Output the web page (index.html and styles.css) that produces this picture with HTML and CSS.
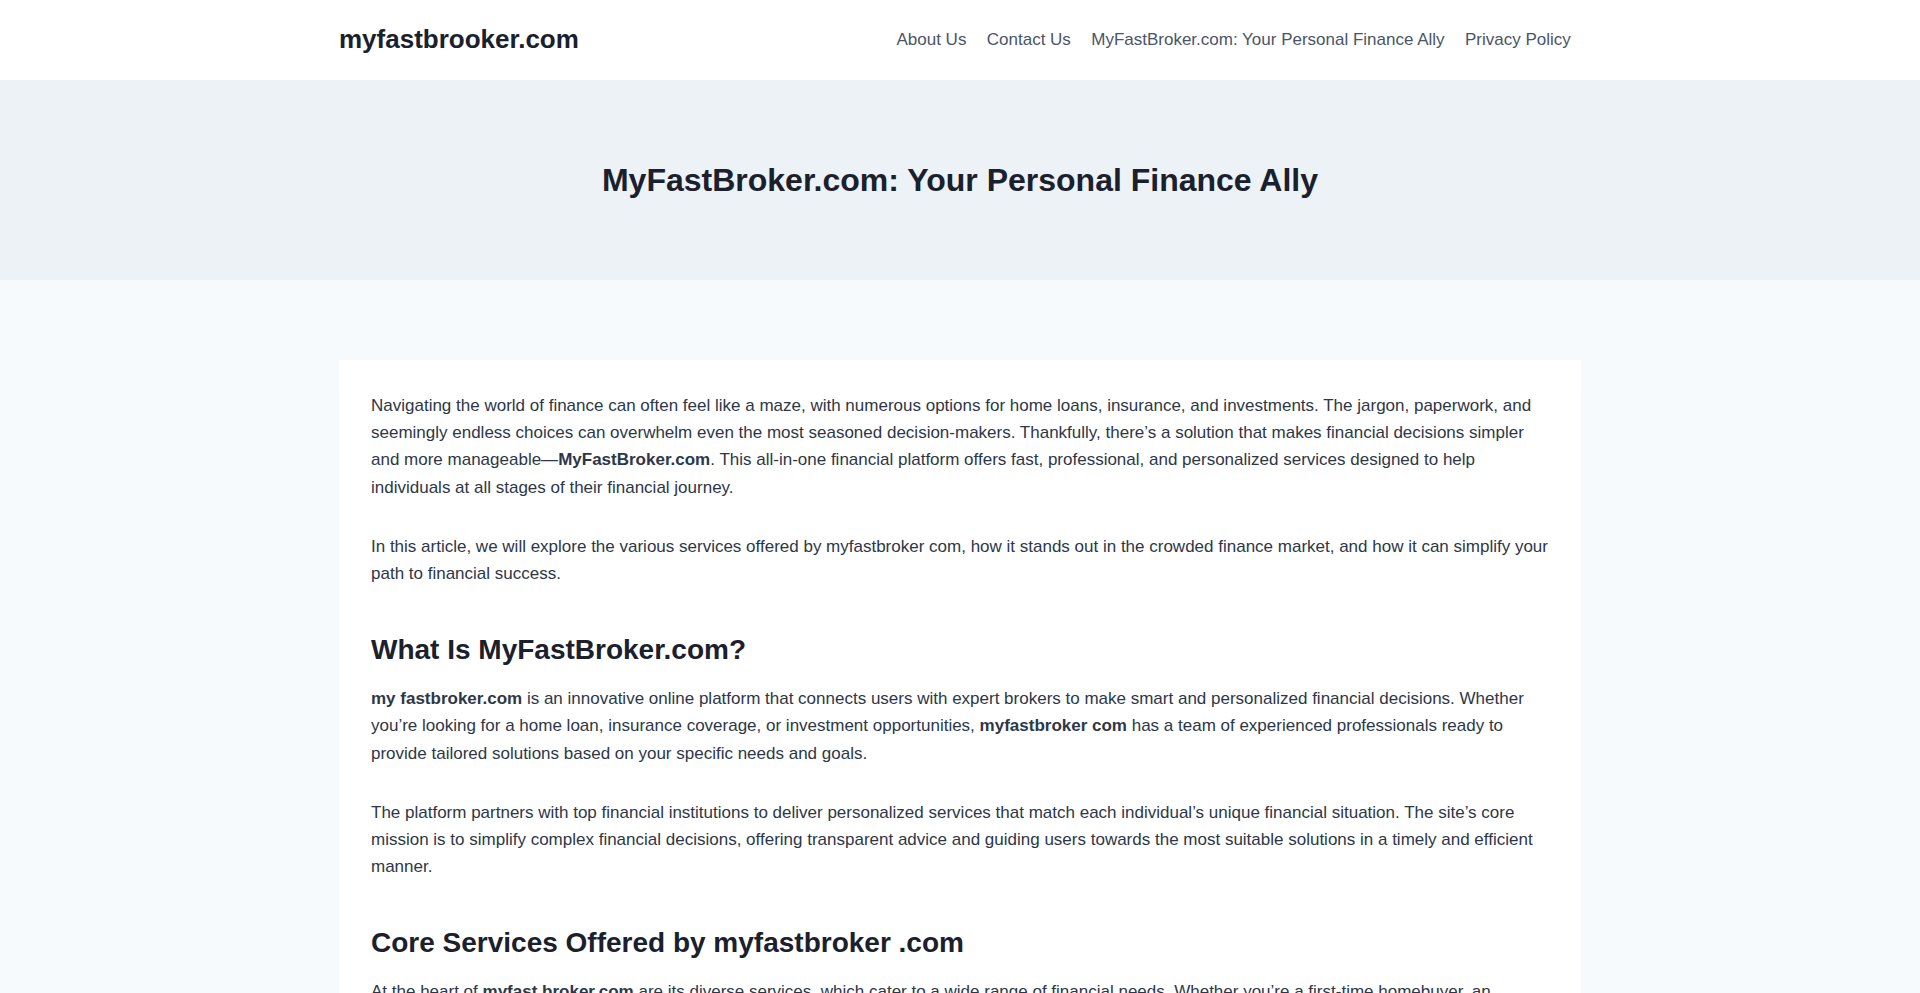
FILE: index.html
```html
<!DOCTYPE html>
<html lang="en">
<head>
<meta charset="utf-8">
<title>MyFastBroker.com: Your Personal Finance Ally</title>
<link rel="stylesheet" href="styles.css">
</head>
<body>
<header class="site-header">
  <div class="container header-inner">
    <a class="site-title" href="#">myfastbrooker.com</a>
    <nav class="main-nav">
      <ul class="menu">
        <li><a href="#">About Us</a></li>
        <li><a href="#">Contact Us</a></li>
        <li><a href="#">MyFastBroker.com: Your Personal Finance Ally</a></li>
        <li><a href="#">Privacy Policy</a></li>
      </ul>
    </nav>
  </div>
</header>

<section class="entry-hero">
  <div class="container hero-inner">
    <h1 class="entry-title">MyFastBroker.com: Your Personal Finance Ally</h1>
  </div>
</section>

<main class="content-area container">
  <article class="content-card">
    <div class="entry-content">
      <p>Navigating the world of finance can often feel like a maze, with numerous options for home loans, insurance, and investments. The jargon, paperwork, and seemingly endless choices can overwhelm even the most seasoned decision-makers. Thankfully, there’s a solution that makes financial decisions simpler and more manageable—<strong>MyFastBroker.com</strong>. This all-in-one financial platform offers fast, professional, and personalized services designed to help individuals at all stages of their financial journey.</p>
      <p>In this article, we will explore the various services offered by myfastbroker com, how it stands out in the crowded finance market, and how it can simplify your path to financial success.</p>
      <h2>What Is MyFastBroker.com?</h2>
      <p><strong>my fastbroker.com</strong> is an innovative online platform that connects users with expert brokers to make smart and personalized financial decisions. Whether you’re looking for a home loan, insurance coverage, or investment opportunities, <strong>myfastbroker com</strong> has a team of experienced professionals ready to provide tailored solutions based on your specific needs and goals.</p>
      <p>The platform partners with top financial institutions to deliver personalized services that match each individual’s unique financial situation. The site’s core mission is to simplify complex financial decisions, offering transparent advice and guiding users towards the most suitable solutions in a timely and efficient manner.</p>
      <h2>Core Services Offered by myfastbroker .com</h2>
      <p>At the heart of <strong>myfast broker.com</strong> are its diverse services, which cater to a wide range of financial needs. Whether you’re a first-time homebuyer, an experienced investor, or someone looking for the right insurance coverage, the platform offers expert guidance tailored to your situation.</p>
      <h3>1. Home Loans</h3>
      <p>Buying a home is one of the biggest financial decisions most people make. The platform connects you with mortgage brokers who compare rates from multiple lenders to find the best fit for your budget.</p>
    </div>
  </article>
</main>
</body>
</html>
```

FILE: styles.css
```css
* {
  box-sizing: border-box;
}

html, body {
  margin: 0;
  padding: 0;
}

body {
  background: #f7fafc;
  color: #2d3748;
  font-family: "Liberation Sans", Arial, sans-serif;
  font-size: 17px;
  line-height: 1.6;
}

a {
  text-decoration: none;
  color: inherit;
}

.container {
  max-width: 1290px;
  margin: 0 auto;
  padding: 0 24px;
}

/* Header */
.site-header {
  background: #ffffff;
}

.header-inner {
  height: 80px;
  display: flex;
  align-items: center;
  justify-content: space-between;
}

.site-title {
  font-size: 26px;
  font-weight: 700;
  line-height: 1.2;
  color: #1a202c;
}

.menu {
  list-style: none;
  margin: 0;
  padding: 0;
  display: flex;
  align-items: center;
}

.menu a {
  display: block;
  padding: 10px 10.2px;
  font-size: 17px;
  line-height: 1.6;
  color: #4a5568;
}

/* Hero */
.entry-hero {
  background: #edf2f7;
}

.hero-inner {
  min-height: 200px;
  display: flex;
  align-items: center;
  justify-content: center;
}

.entry-title {
  margin: 0;
  font-size: 32px;
  line-height: 1.5;
  font-weight: 700;
  color: #1a202c;
  text-align: center;
}

/* Content */
.content-area {
  margin-top: 80px;
  margin-bottom: 80px;
}

.content-card {
  background: #ffffff;
  padding: 32px;
  box-shadow: 0 15px 15px -10px rgba(0, 0, 0, 0.05);
  border-radius: 0;
}

.entry-content p {
  margin: 0 0 32px;
}

.entry-content strong {
  font-weight: 700;
}

.entry-content h2 {
  font-size: 28px;
  line-height: 1.5;
  font-weight: 700;
  color: #1a202c;
  margin: 1.5em 0 0.5em;
}

.entry-content h3 {
  font-size: 24px;
  line-height: 1.5;
  font-weight: 700;
  color: #1a202c;
  margin: 1.5em 0 0.5em;
}
```
